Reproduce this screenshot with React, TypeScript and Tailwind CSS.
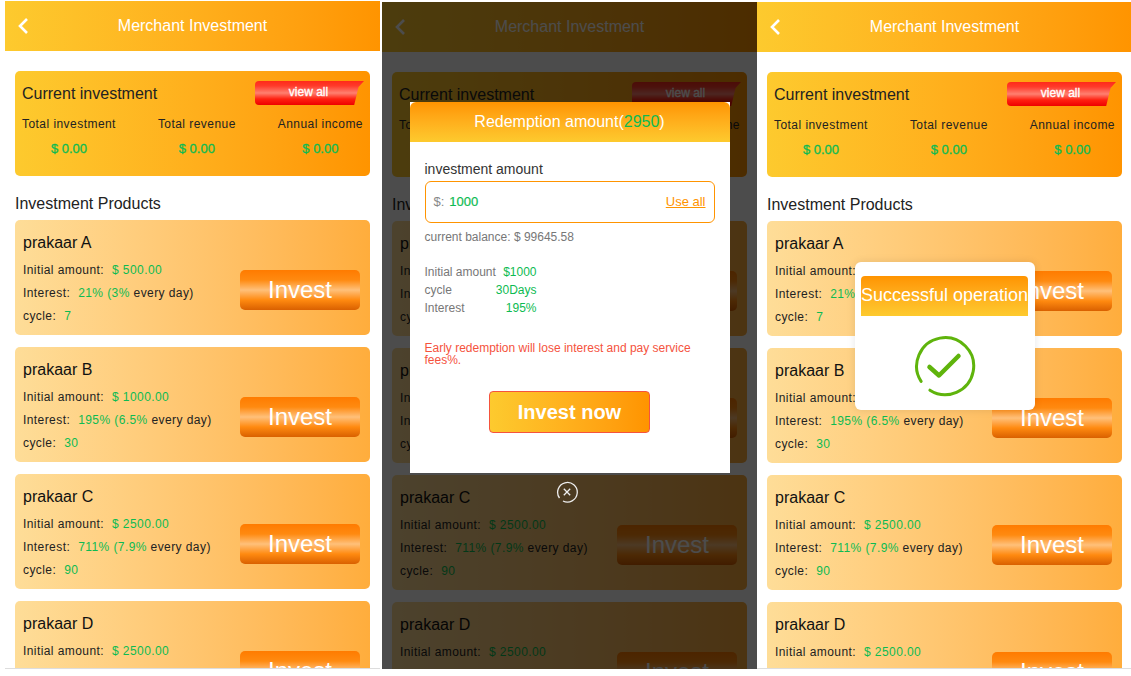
import React from "react";

const products = [
  { name: "prakaar A", amount: "$ 500.00", rate: "21% (3%", cycle: "7" },
  { name: "prakaar B", amount: "$ 1000.00", rate: "195% (6.5%", cycle: "30" },
  { name: "prakaar C", amount: "$ 2500.00", rate: "711% (7.9%", cycle: "90" },
  { name: "prakaar D", amount: "$ 2500.00", rate: "711% (7.9%", cycle: "90" },
];

function Back() {
  return (
    <svg width="12" height="18" viewBox="0 0 12 18" className="absolute left-[12px] top-[16px]" fill="none" stroke="#fff" strokeWidth="2.6">
      <path d="M10 2 3 9l7 7" />
    </svg>
  );
}

function Stat({ label }: { label: string }) {
  return (
    <div className="text-center">
      <div className="text-[12px] tracking-[0.45px] leading-[16px] text-[#222]">{label}</div>
      <div className="mt-[9px] text-[13px] font-medium leading-[16px] text-[#0dbb52] [-webkit-text-stroke:0.3px_#0dbb52]">$ 0.00</div>
    </div>
  );
}

function Product({ p }: { p: (typeof products)[number] }) {
  return (
    <div className="flex h-[115px] shrink-0 items-start justify-between rounded-[5px] bg-gradient-to-r from-[#fedd98] to-[#ffad3c] pl-[8px] pr-[10px] pt-[13px]">
      <div className="text-[12px] tracking-[0.42px] text-[#222]">
        <div className="mb-[6px] text-[16px] leading-[20px] tracking-normal text-[#111]">{p.name}</div>
        <div className="leading-[23px]">
          Initial amount:<span className="ml-[8px] text-[#0dbb52]">{p.amount}</span>
        </div>
        <div className="leading-[23px]">
          Interest:<span className="ml-[8px] text-[#0dbb52]">{p.rate}</span> every day)
        </div>
        <div className="leading-[23px]">
          cycle:<span className="ml-[8px] text-[#0dbb52]">{p.cycle}</span>
        </div>
      </div>
      <button className="mt-[37px] h-[40px] w-[120px] rounded-[5px] bg-[linear-gradient(to_bottom,#ff7b00_0%,#ff8a10_25%,#ffc07a_50%,#ff8a10_75%,#d96000_100%)] text-[24px] leading-[38px] text-white">
        Invest
      </button>
    </div>
  );
}

function Phone({ className = "", children }: { className?: string; children?: React.ReactNode }) {
  return (
    <div className={`relative h-[667px] w-[375px] shrink-0 overflow-hidden bg-white ${className}`}>
      <header className="relative flex h-[50px] items-center justify-center bg-gradient-to-r from-[#fdca2e] to-[#ff9400] text-[16px] text-white">
        <Back />
        <span>Merchant Investment</span>
      </header>
      <main className="flex flex-col px-[10px] pt-[20px]">
        <section className="h-[105px] rounded-[5px] bg-gradient-to-r from-[#fdca2e] to-[#ff9400] pl-[8px] pr-[7px] pt-[10px]">
          <div className="flex h-[24px] items-center justify-between">
            <span className="ml-[-1px] mt-[2px] text-[16px] text-[#222]">Current investment</span>
            <span className="mr-[-1px] h-[24px] w-[109px] rounded-l-[4px] bg-[linear-gradient(to_bottom,#ff2a1a_0%,#ff3a2a_20%,#ff8070_50%,#ff2010_75%,#ee0000_100%)] pr-[2px] text-center text-[12px] leading-[23px] text-white [-webkit-text-stroke:0.3px_#fff] [clip-path:polygon(0_0,100%_0,95%_25%,91%_100%,0_100%)]">
              view all
            </span>
          </div>
          <div className="ml-[-1px] mt-[11px] flex justify-between">
            <Stat label="Total investment" />
            <Stat label="Total revenue" />
            <Stat label="Annual income" />
          </div>
        </section>
        <h2 className="mb-[6px] mt-[18px] text-[16px] leading-[20px] text-[#222]">Investment Products</h2>
        <div className="flex flex-col gap-[12px]">
          {products.map((p) => (
            <Product key={p.name} p={p} />
          ))}
        </div>
      </main>
      {children}
    </div>
  );
}

function RedeemRow({ label, value }: { label: string; value: string }) {
  return (
    <div className="flex w-[112px] justify-between leading-[18px]">
      <span className="text-[#777]">{label}</span>
      <span className="text-[#0dbb52]">{value}</span>
    </div>
  );
}

function RedeemOverlay() {
  return (
    <div className="absolute inset-0 flex flex-col items-center bg-black/70 pt-[100px]">
      <div className="h-[371px] w-[320px] bg-white">
        <div className="h-[40px] rounded-t-[6px] bg-gradient-to-b from-[#ff9400] to-[#fdca2e] text-center text-[16px] leading-[39px] text-white">
          Redemption amount(<span className="text-[#0dbb52]">2950</span>)
        </div>
        <div className="px-[15px] pt-[19px]">
          <div className="text-[14px] leading-[16px] text-[#333]">investment amount</div>
          <div className="mt-[4px] flex h-[42px] items-center rounded-[6px] border border-[#ff9400] pl-[8px] pr-[8px] text-[13px]">
            <span className="text-[#888]">$:</span>
            <span className="ml-[5px] font-medium text-[#0dbb52] [-webkit-text-stroke:0.2px_#0dbb52]">1000</span>
            <span className="ml-auto text-[#ff9400] underline">Use all</span>
          </div>
          <div className="mt-[7px] text-[12px] leading-[14px] text-[#777]">current balance: $ 99645.58</div>
          <div className="mt-[19px] text-[12px]">
            <RedeemRow label="Initial amount" value="$1000" />
            <RedeemRow label="cycle" value="30Days" />
            <RedeemRow label="Interest" value="195%" />
          </div>
          <div className="mt-[25px] text-[12px] leading-[12px] text-[#f5533d]">
            Early redemption will lose interest and pay service fees%.
          </div>
          <button className="mx-auto mt-[25px] block h-[42px] w-[161px] rounded-[4px] border border-[#f5533d] bg-gradient-to-r from-[#fdca2e] to-[#ff9400] text-[20px] font-bold text-white">
            Invest now
          </button>
        </div>
      </div>
      <svg width="22" height="22" viewBox="0 0 22 22" fill="none" stroke="#eee" strokeWidth="1.3" className="ml-[-5px] mt-[8px]">
        <path d="M3.5 17A9.8 9.800 0 1 1 7 20" />
        <path d="m7.800 7.800 6.400 6.400m0-6.400-6.400 6.400" />
      </svg>
    </div>
  );
}

function SuccessToast() {
  return (
    <div className="absolute left-[98px] top-[260px] h-[148px] w-[180px] rounded-[6px] bg-white px-[6px] pt-[14px] shadow-[0_0_8px_rgba(0,0,0,0.1)]">
      <div className="h-[40px] w-[167px] rounded-t-[4px] bg-gradient-to-b from-[#ff9400] to-[#fdca2e] whitespace-nowrap text-center text-[18px] leading-[39px] text-white">
        Successful operation
      </div>
      <svg width="62" height="62" viewBox="0 0 62 62" fill="none" stroke="#5fb40c" className="mx-auto mt-[19px]">
        <path d="M7.100 46.400A28.500 28.500 0 1 1 15.900 55.200" strokeWidth="3" strokeLinecap="round" />
        <path d="M15.500 32 25 40.500 44.500 21" strokeWidth="4.500" strokeLinecap="round" strokeLinejoin="round" />
      </svg>
    </div>
  );
}

export default function App() {
  return (
    <div className="h-[676px] w-[1131px] overflow-hidden bg-white [font-family:'Liberation_Sans',Arial,sans-serif]">
      <div className="flex items-start pl-[5px] pt-[1px]">
        <Phone className="h-[668px] border-b border-[#ddd]" />
        <Phone className="ml-[2px] mt-[1px]">
          <RedeemOverlay />
        </Phone>
        <Phone className="mt-[1px] border-b border-[#ddd]">
          <SuccessToast />
        </Phone>
      </div>
    </div>
  );
}
